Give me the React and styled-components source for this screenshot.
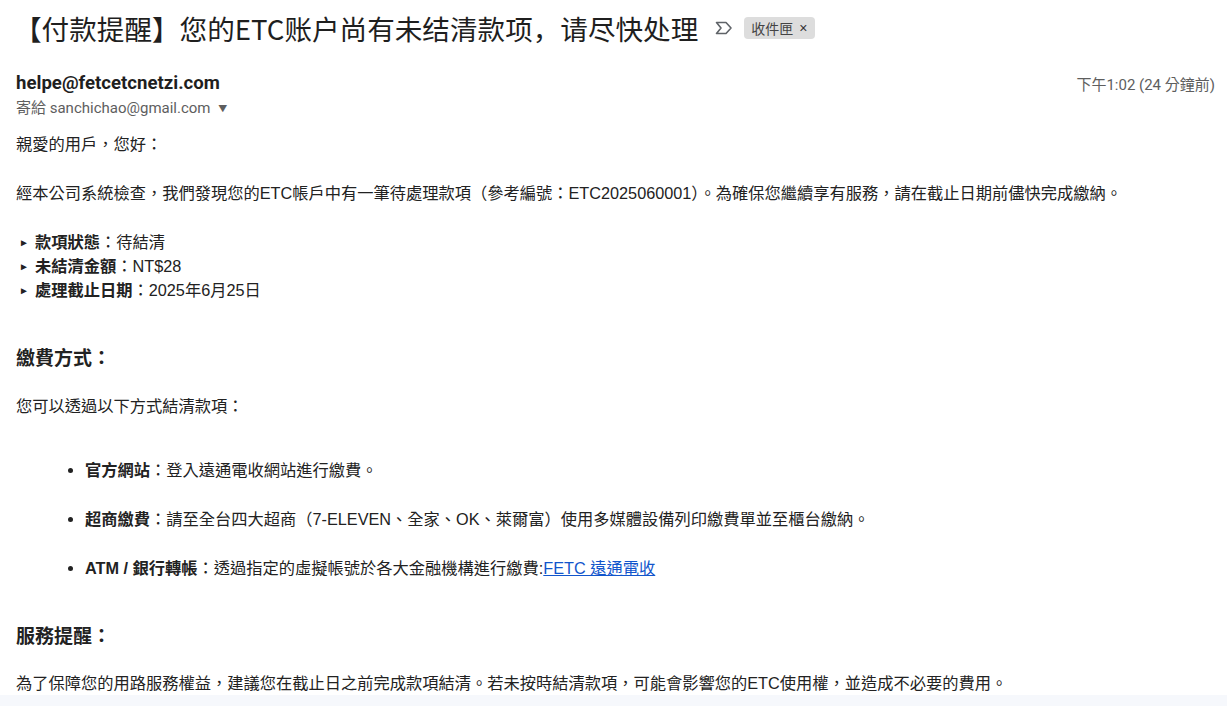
import React from "react";
import styled, { createGlobalStyle } from "styled-components";

const GlobalStyle = createGlobalStyle`
  html, body {
    margin: 0;
    padding: 0;
    background: #f6f8fc;
  }
  body {
    font-family: "Liberation Sans", "Noto Sans CJK TC", sans-serif;
    color: #222;
  }
`;

const details = [
  { label: "款項狀態", value: "待結清" },
  { label: "未結清金額", value: "NT$28" },
  { label: "處理截止日期", value: "2025年6月25日" },
];

const App = () => {
  return (
    <>
      <GlobalStyle />
      <Page>
        <SubjectRow>
          <Subject>【付款提醒】您的ETC账户尚有未结清款项，请尽快处理</Subject>
          <ImportantIcon viewBox="0 0 20 16">
            <path
              d="M2.5 2.5 H12 L17 8 L12 13.5 H2.5 L7 8 Z"
              fill="none"
              stroke="#5f6368"
              strokeWidth="1.6"
              strokeLinejoin="round"
            />
          </ImportantIcon>
          <Label>
            收件匣 <LabelClose>×</LabelClose>
          </Label>
        </SubjectRow>

        <Message>
          <SenderRow>
            <Sender>helpe@fetcetcnetzi.com</Sender>
            <Time>下午1:02 (24 分鐘前)</Time>
          </SenderRow>
          <Recipient>
            寄給 sanchichao@gmail.com <Caret>▼</Caret>
          </Recipient>

          <Body>
            <Paragraph>親愛的用戶，您好：</Paragraph>
            <Paragraph $gap={25}>
              經本公司系統檢查，我們發現您的ETC帳戶中有一筆待處理款項（參考編號：ETC2025060001）。為確保您繼續享有服務，請在截止日期前儘快完成繳納。
            </Paragraph>

            <DetailList>
              {details.map((d) => (
                <DetailItem key={d.label}>
                  <Marker>►</Marker>
                  <strong>{d.label}</strong>：{d.value}
                </DetailItem>
              ))}
            </DetailList>

            <SectionTitle>繳費方式：</SectionTitle>
            <Paragraph $gap={22}>您可以透過以下方式結清款項：</Paragraph>

            <MethodList>
              <MethodItem>
                <strong>官方網站</strong>：登入遠通電收網站進行繳費。
              </MethodItem>
              <MethodItem>
                <strong>超商繳費</strong>
                ：請至全台四大超商（7-ELEVEN、全家、OK、萊爾富）使用多媒體設備列印繳費單並至櫃台繳納。
              </MethodItem>
              <MethodItem>
                <strong>ATM / 銀行轉帳</strong>
                ：透過指定的虛擬帳號於各大金融機構進行繳費:
                <Link href="#">FETC 遠通電收</Link>
              </MethodItem>
            </MethodList>

            <SectionTitle>服務提醒：</SectionTitle>
            <Paragraph $gap={21}>
              為了保障您的用路服務權益，建議您在截止日之前完成款項結清。若未按時結清款項，可能會影響您的ETC使用權，並造成不必要的費用。
            </Paragraph>
          </Body>
        </Message>
      </Page>
    </>
  );
};
export default App;

const Page = styled.div`
  background: #ffffff;
  width: 1227px;
  padding-top: 10px;
`;

const SubjectRow = styled.div`
  display: flex;
  align-items: center;
  padding-left: 14px;
  height: 36px;
`;

const Subject = styled.h2`
  margin: 0;
  font-family: "Noto Sans CJK SC", sans-serif;
  font-weight: 400;
  font-size: 27.6px;
  line-height: 36px;
  color: #1f1f1f;
`;

const ImportantIcon = styled.svg`
  width: 20px;
  height: 16px;
  margin-left: 16px;
`;

const Label = styled.span`
  margin-left: 10px;
  display: inline-flex;
  align-items: center;
  gap: 6px;
  background: #dddddd;
  color: #444;
  font-family: "Noto Sans CJK TC", sans-serif;
  font-size: 14px;
  line-height: 22px;
  padding: 0 7px;
  border-radius: 4px;
`;

const LabelClose = styled.span`
  font-family: "Liberation Sans", sans-serif;
  font-size: 14px;
  color: #333;
`;

const Message = styled.div`
  padding: 26px 12px 0 16px;
`;

const SenderRow = styled.div`
  display: flex;
  justify-content: space-between;
  align-items: center;
  height: 22px;
`;

const Sender = styled.span`
  font-family: "Roboto", sans-serif;
  font-weight: 700;
  font-size: 18.6px;
  color: #1f1f1f;
`;

const Time = styled.span`
  font-family: "Roboto", "Noto Sans CJK TC", sans-serif;
  font-size: 15px;
  color: #5e5e5e;
`;

const Recipient = styled.div`
  margin-top: 4px;
  font-family: "Roboto", "Noto Sans CJK TC", sans-serif;
  font-size: 15px;
  line-height: 20px;
  color: #5e5e5e;
`;

const Caret = styled.span`
  font-size: 9px;
  margin-left: 4px;
  vertical-align: middle;
`;

const Body = styled.div`
  margin-top: 13px;
  font-size: 16.25px;
  line-height: 24px;
  color: #222;
`;

const Paragraph = styled.p`
  margin: ${({ $gap }) => $gap || 0}px 0 0;
  height: 24px;
`;

const DetailList = styled.div`
  margin-top: 25px;
`;

const DetailItem = styled.div`
  height: 24px;
  line-height: 24px;
  overflow: hidden;
`;

const Marker = styled.span`
  display: inline-block;
  width: 16px;
  padding-left: 3px;
  font-size: 10px;
  line-height: 1;
  vertical-align: 2px;
  color: #222;
`;

const SectionTitle = styled.h3`
  margin: 44px 0 0;
  font-size: 19px;
  line-height: 26px;
  height: 26px;
  font-weight: 700;
  color: #222;
`;

const MethodList = styled.ul`
  margin: 40px 0 0;
  padding-left: 69px;
`;

const MethodItem = styled.li`
  line-height: 24px;
  height: 24px;
  & + & {
    margin-top: 25px;
  }
`;

const Link = styled.a`
  color: #1155cc;
  text-decoration: underline;
`;
